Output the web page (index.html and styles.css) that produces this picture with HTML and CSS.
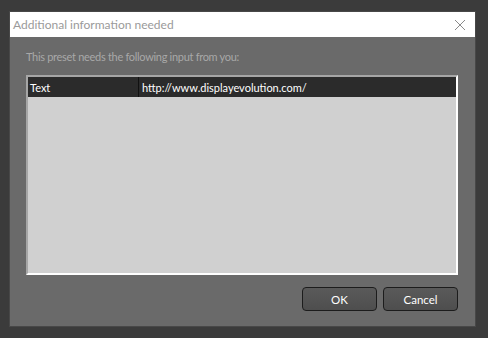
FILE: index.html
```html
<!DOCTYPE html>
<html>
<head>
  <meta charset="utf-8">
  <title>Additional information needed</title>
  <link rel="stylesheet" href="styles.css">
</head>
<body>
  <div class="dialog">
    <div class="titlebar">
      <span class="title">Additional information needed</span>
      <svg class="close" width="12" height="12" viewBox="0 0 12 12">
        <path d="M1 1 L11 11 M11 1 L1 11" stroke="#8a8a8a" stroke-width="1" fill="none"/>
      </svg>
    </div>
    <div class="content">
      <p class="intro">This preset needs the following input from you:</p>
      <div class="grid">
        <div class="row">
          <div class="cell name">Text</div>
          <div class="cell value">http://www.displayevolution.com/</div>
        </div>
      </div>
      <div class="buttons">
        <button class="btn">OK</button>
        <button class="btn">Cancel</button>
      </div>
    </div>
  </div>
</body>
</html>
```

FILE: styles.css
```css
body {
  margin: 0;
  padding: 11px 0 0 9px;
  background-color: #3b3b3b;
  font-family: Lato, "Noto Sans", sans-serif;
  font-size: 11px;
}

.dialog {
  width: 465px;
  height: 314px;
  border: 1px solid #484848;
  display: flex;
  flex-direction: column;
}

.titlebar {
  height: 25px;
  background-color: #ffffff;
  display: flex;
  align-items: center;
  justify-content: space-between;
  padding: 0 9px 0 3px;
}

.title {
  color: #9a9a9a;
  font-size: 12px;
}

.close {
  display: block;
}

.content {
  flex: 1;
  background-color: #6a6a6a;
  padding: 12px 17px 14px 16px;
  display: flex;
  flex-direction: column;
}

.intro {
  margin: 0 0 10px 0;
  color: #a8a8a8;
  line-height: 16px;
  letter-spacing: -0.3px;
}

.grid {
  height: 196px;
  background-color: #d0d0d0;
  border-top: 2px solid #a6a6a6;
  border-left: 2px solid #a6a6a6;
  border-right: 2px solid #ffffff;
  border-bottom: 2px solid #ffffff;
}

.row {
  display: flex;
  height: 20px;
  background-color: #2b2b2b;
  color: #ffffff;
}

.cell {
  line-height: 21px;
  padding-left: 2px;
}

.name {
  width: 108px;
  border-right: 1px solid #111111;
}

.value {
  padding-left: 3px;
}

.buttons {
  margin-top: 12px;
  display: flex;
  justify-content: flex-end;
  gap: 6px;
}

.btn {
  width: 75px;
  height: 24px;
  border: 1px solid #1c1c1c;
  border-radius: 4px;
  background: linear-gradient(#5a5a5a, #4e4e4e);
  color: #ffffff;
  font-family: Lato, "Noto Sans", sans-serif;
  font-size: 11.5px;
  padding: 0;
}
```
